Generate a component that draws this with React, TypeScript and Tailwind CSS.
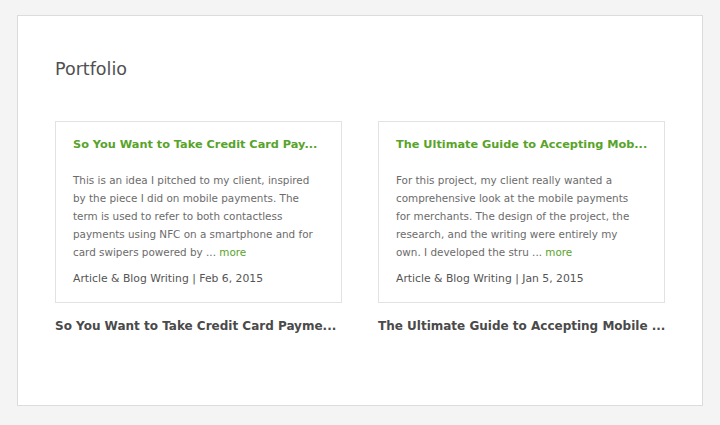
export default function App() {
  const items = [
    {
      title: 'So You Want to Take Credit Card Pay...',
      lines: [
        'This is an idea I pitched to my client, inspired',
        'by the piece I did on mobile payments. The',
        'term is used to refer to both contactless',
        'payments using NFC on a smartphone and for',
        'card swipers powered by ...',
      ],
      meta: 'Article & Blog Writing | Feb 6, 2015',
      caption: 'So You Want to Take Credit Card Payme...',
    },
    {
      title: 'The Ultimate Guide to Accepting Mob...',
      lines: [
        'For this project, my client really wanted a',
        'comprehensive look at the mobile payments',
        'for merchants. The design of the project, the',
        'research, and the writing were entirely my',
        'own. I developed the stru ...',
      ],
      meta: 'Article & Blog Writing | Jan 5, 2015',
      caption: 'The Ultimate Guide to Accepting Mobile ...',
    },
  ];

  return (
    <div className="h-[425px] w-[720px] bg-[#f4f4f4] pl-[17px] pt-[15px]" style={{ fontFamily: '"DejaVu Sans", sans-serif' }}>
      <div className="h-[391px] w-[686px] border border-[#dcdcdc] bg-white pl-[37px] pt-[42px]">
        <h1 className="text-[17.5px] leading-[22px] text-[#505050]">Portfolio</h1>

        {/* Cards */}
        <div className="mt-[41px] flex gap-[36px]">
          {items.map((item) => (
            <div key={item.title} className="w-[287px]">
              <div className="h-[182px] border border-[#e2e2e2] bg-white px-[17px] pt-[15px]">
                <h2 className="whitespace-nowrap text-[11.3px] leading-[16px] font-bold text-[#58a32a]">{item.title}</h2>
                <p className="mt-[18px] text-[10.4px] leading-[18px] text-[#6b6b6b]">
                  {item.lines.map((line, i) => (
                    <span key={i} className="block whitespace-nowrap">
                      {line}
                      {i === item.lines.length - 1 && <span className="text-[#58a32a]"> more</span>}
                    </span>
                  ))}
                </p>
                <p className="mt-[10px] text-[10.8px] leading-[16px] text-[#555]">{item.meta}</p>
              </div>
              <p className="mt-[15px] whitespace-nowrap text-[12px] leading-[16px] font-bold text-[#4a4a4a]">{item.caption}</p>
            </div>
          ))}
        </div>
      </div>
    </div>
  );
}
